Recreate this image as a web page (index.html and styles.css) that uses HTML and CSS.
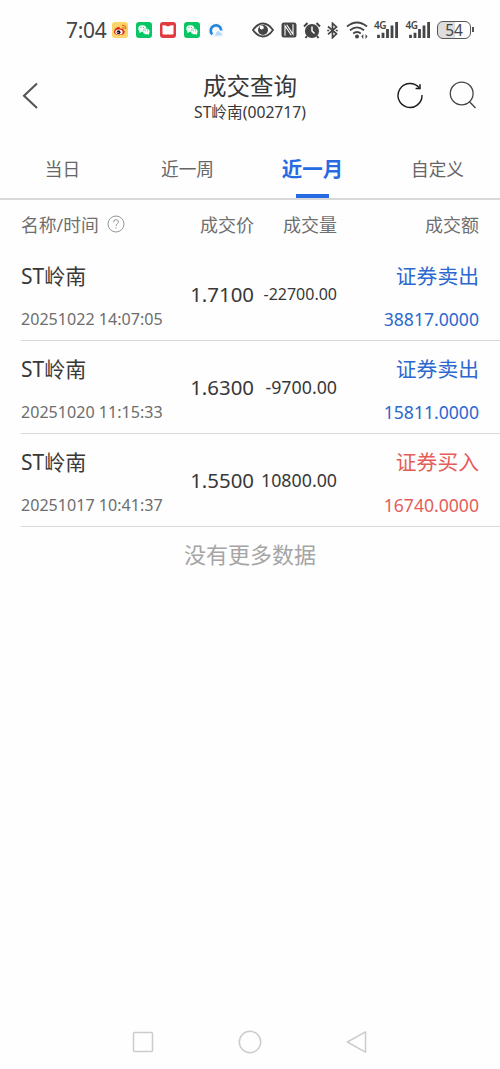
FILE: index.html
```html
<!DOCTYPE html>
<html lang="zh-CN">
<head>
  <meta charset="UTF-8">
  <meta name="viewport" content="width=device-width, initial-scale=1.0">
  <title>成交查询</title>
  <link rel="stylesheet" href="styles.css">
</head>
<body>
  <div class="statusbar">
    <span class="clock">7:04</span>
    <div class="apps">
      <svg width="16" height="16" viewBox="0 0 16 16">
        <rect width="16" height="16" rx="3" fill="#fbd568"/>
        <path d="M2 10C2 7 5.500 4 7.500 5.200Q8.300 6 7.900 6.600Q12 5.800 11.500 8Q13.500 9 12.500 11C11 14 2 14 2 10Z" fill="#dc2b22"/>
        <ellipse cx="6.900" cy="10" rx="3.700" ry="2.600" fill="#fff"/>
        <circle cx="6.600" cy="10.200" r="1.900" fill="#1c1311"/>
        <circle cx="6" cy="10.500" r=".6" fill="#fff"/>
        <path d="M10 3.300Q14.300 3 13.800 7.200M10.200 5.300Q12.200 5 11.900 7" fill="none" stroke="#e8622a" stroke-width="1.100"/>
      </svg>
      <svg width="16" height="16" viewBox="0 0 16 16">
        <rect width="16" height="16" rx="3" fill="#07c664"/>
        <ellipse cx="6.300" cy="6.600" rx="4" ry="3.400" fill="#fff"/>
        <path d="M3.500 8.500L3.300 11L6 9.700Z" fill="#fff"/>
        <ellipse cx="10.300" cy="9.500" rx="3.500" ry="2.900" fill="#fff" stroke="#07c664" stroke-width=".5"/>
        <path d="M11 11.800L13 12.900L12.700 10.500Z" fill="#fff"/>
        <path d="M5 5.600h.1M7.600 5.600h.1M9.200 8.800h.1M11.500 8.800h.1" stroke="#07c664" stroke-width="1" stroke-linecap="round"/>
      </svg>
      <svg width="16" height="16" viewBox="0 0 16 16">
        <rect width="16" height="16" rx="3" fill="#e23a40"/>
        <path d="M2.500 3.200Q5.500 3 8 4.500Q10.500 3 13.500 3.200V11.500Q13.500 12.500 12.500 12.500H3.500Q2.500 12.500 2.500 11.500Z" fill="#fff"/>
      </svg>
      <svg width="16" height="16" viewBox="0 0 16 16">
        <rect width="16" height="16" rx="3" fill="#07c664"/>
        <ellipse cx="6.300" cy="6.600" rx="4" ry="3.400" fill="#fff"/>
        <path d="M3.500 8.500L3.300 11L6 9.700Z" fill="#fff"/>
        <ellipse cx="10.300" cy="9.500" rx="3.500" ry="2.900" fill="#fff" stroke="#07c664" stroke-width=".5"/>
        <path d="M11 11.800L13 12.900L12.700 10.500Z" fill="#fff"/>
        <path d="M5 5.600h.1M7.600 5.600h.1M9.200 8.800h.1M11.500 8.800h.1" stroke="#07c664" stroke-width="1" stroke-linecap="round"/>
      </svg>
      <svg width="16" height="16" viewBox="0 0 16 16">
        <rect width="16" height="16" rx="3" fill="#f7f9fb"/>
        <path d="M4.300 12.400A5.300 5.300 0 1 1 13.300 8.500" fill="none" stroke="#2587dc" stroke-width="2.700"/>
        <path d="M5 13.300Q8 14.200 8 11Q10.500 7.500 12 10.500Q14.500 11 14 13.500Z" fill="#b3dafa"/>
      </svg>
    </div>
    <div class="signals">
      <svg class="eye" width="22" height="16" viewBox="0 0 22 16">
        <path d="M1 8Q5.500 1.500 11 1.500Q16.500 1.500 21 8Q16.500 14.500 11 14.500Q5.500 14.500 1 8Z" fill="none" stroke="#454545" stroke-width="1.800"/>
        <circle cx="11" cy="8" r="5" fill="#454545"/>
        <circle cx="9.700" cy="5.600" r="2" fill="#fff"/>
      </svg>
      <svg class="nfc" width="16" height="16" viewBox="0 0 16 16">
        <rect x=".5" y=".5" width="15" height="15" rx="2.500" fill="#454545"/>
        <path d="M4 13.800V3.800L10.300 13.200M5.700 2.800L12 12.200V2.200" fill="none" stroke="#fff" stroke-width="1.100"/>
      </svg>
      <svg class="alarm" width="18" height="17" viewBox="0 0 18 17">
        <circle cx="9" cy="9" r="7.100" fill="#454545"/>
        <path d="M1 4.500L4.500 1M17 4.500L13.500 1M4 14L2.500 16M14 14L15.500 16" stroke="#454545" stroke-width="2"/>
        <path d="M9 4.500V9L11.500 11.500" fill="none" stroke="#fff" stroke-width="1.500"/>
      </svg>
      <svg class="bluetooth" width="11" height="17" viewBox="0 0 11 17">
        <path d="M1 4.500L9.500 11.800L5.500 15.700V1.300L9.500 5L1 12.300" fill="none" stroke="#454545" stroke-width="1.700"/>
        <path d="M.2 8.500h2M8.800 8.500h2" stroke="#454545" stroke-width="1.600"/>
      </svg>
      <svg class="wifi" width="23" height="18" viewBox="0 0 23 18">
        <path d="M1 5.500Q11 -2.500 21 5.500M4 9.200Q11 3.500 18 9.200M7.200 12.500Q11 9.500 14.800 12.500" fill="none" stroke="#454545" stroke-width="1.800"/>
        <circle cx="11" cy="15.500" r="2" fill="#454545"/>
        <path d="M15.300 15.500L17.300 13V18ZM21.500 15.500L19.500 13V18Z" fill="#454545"/>
      </svg>
      <div class="cell">
        <span>4G</span>
        <svg width="22" height="16" viewBox="0 0 22 16">
          <path d="M1.500 12.700V16M6 10.700V16M10.500 7V16M15 3.500V16M19.600 0V16" stroke="#454545" stroke-width="2.800"/>
        </svg>
      </div>
      <div class="cell">
        <span>4G</span>
        <svg width="22" height="16" viewBox="0 0 22 16">
          <path d="M1.500 12.700V16M6 10.700V16M10.500 7V16M15 3.500V16M19.600 0V16" stroke="#454545" stroke-width="2.800"/>
        </svg>
      </div>
      <div class="battery">54</div>
    </div>
  </div>

  <header class="navbar">
    <svg class="back" width="16" height="28" viewBox="0 0 16 28">
      <path d="M15 1.500L2 13.700L15 26" fill="none" stroke="#555" stroke-width="2.100"/>
    </svg>
    <div class="heading">
      <h1>成交查询</h1>
      <p>ST岭南(002717)</p>
    </div>
    <div class="actions">
      <svg width="28" height="28" viewBox="0 0 28 28">
        <path d="M26 14A12 12 0 1 1 23.200 6.800" fill="none" stroke="#1a1a1a" stroke-width="1.400"/>
        <path d="M24 3.200V7.500H19.600" fill="none" stroke="#1a1a1a" stroke-width="1.500"/>
      </svg>
      <svg width="28" height="28" viewBox="0 0 28 28">
        <circle cx="12.700" cy="12.500" r="11.400" fill="none" stroke="#444" stroke-width="1.300"/>
        <path d="M20.500 20.800L26.500 27" stroke="#444" stroke-width="1.400"/>
      </svg>
    </div>
  </header>

  <nav class="tabs">
    <a class="tab">当日</a>
    <a class="tab">近一周</a>
    <a class="tab active">近一月</a>
    <a class="tab">自定义</a>
  </nav>

  <div class="columns grid">
    <span class="name">名称/时间
      <svg width="18" height="18" viewBox="0 0 18 18">
        <circle cx="9" cy="9" r="8" fill="none" stroke="#8c8c8c" stroke-width=".9"/>
        <path d="M6.500 7.200Q6.500 4.700 9 4.700Q11.500 4.700 11.500 6.900Q11.500 8 10.200 8.900Q9 9.700 9 11M9 12.300V13.500" fill="none" stroke="#8c8c8c" stroke-width=".9"/>
      </svg>
    </span>
    <span class="num">成交价</span>
    <span class="num">成交量</span>
    <span class="num">成交额</span>
  </div>

  <ul class="trades">
    <li class="trade grid">
      <div class="stock"><b>ST岭南</b><time>20251022 14:07:05</time></div>
      <span class="price">1.7100</span>
      <span class="volume small">-22700.00</span>
      <div class="amount sell"><b>证券卖出</b><span>38817.0000</span></div>
    </li>
    <li class="trade grid">
      <div class="stock"><b>ST岭南</b><time>20251020 11:15:33</time></div>
      <span class="price">1.6300</span>
      <span class="volume">-9700.00</span>
      <div class="amount sell"><b>证券卖出</b><span>15811.0000</span></div>
    </li>
    <li class="trade grid">
      <div class="stock"><b>ST岭南</b><time>20251017 10:41:37</time></div>
      <span class="price">1.5500</span>
      <span class="volume">10800.00</span>
      <div class="amount buy"><b>证券买入</b><span>16740.0000</span></div>
    </li>
  </ul>
  <p class="nomore">没有更多数据</p>

  <footer class="syskeys">
    <svg width="24" height="24" viewBox="0 0 24 24"><rect x="2.500" y="2.500" width="19" height="19" rx="1"/></svg>
    <svg width="24" height="24" viewBox="0 0 24 24"><circle cx="12" cy="12" r="10.700"/></svg>
    <svg width="24" height="24" viewBox="0 0 24 24"><path d="M2.300 12L20.500 1.800V22.200Z"/></svg>
  </footer>
</body>
</html>
```
FILE: styles.css
```css
* {
  margin: 0;
  padding: 0;
  box-sizing: border-box;
}

body {
  height: 1069px;
  display: flex;
  flex-direction: column;
  font-family: "Noto Sans", "Noto Sans CJK SC", sans-serif;
  background: #fefefe;
  color: #383838;
  overflow: hidden;
}

svg {
  display: block;
  flex: none;
}

/* status bar */
.statusbar {
  height: 60px;
  padding: 0 29px 0 66px;
  display: flex;
  align-items: center;
  color: #454545;
}

.clock {
  width: 46px;
  font-size: 21px;
  letter-spacing: -0.3px;
}

.apps {
  display: flex;
  gap: 8px;
}

.signals {
  margin-left: auto;
  display: flex;
  align-items: center;
}

.eye { margin-right: 7px; }
.nfc { margin-right: 6px; }
.alarm { margin-right: 6px; }
.bluetooth { margin-right: 8px; }
.wifi { margin-right: 5px; }

.cell {
  position: relative;
  width: 31.5px;
  height: 16px;
  padding-left: 3px;
}

.cell span {
  position: absolute;
  left: 0;
  top: -3px;
  font-size: 10px;
  font-weight: 600;
  line-height: 12px;
  letter-spacing: -0.4px;
}

.battery {
  position: relative;
  width: 34px;
  height: 18px;
  border: 1.5px solid #555;
  border-radius: 6px;
  background: linear-gradient(90deg, #dedede 54%, #fefefe 54%);
  font-size: 15.5px;
  line-height: 16px;
  text-align: center;
}

.battery::after {
  content: "";
  position: absolute;
  right: -4px;
  top: 5px;
  width: 2px;
  height: 5px;
  background: #555;
}

/* title */
.navbar {
  height: 75px;
  padding: 0 23px 0 22px;
  display: grid;
  grid-template-columns: 100px 1fr 99px;
  align-items: start;
}

.back {
  margin-top: 22px;
}

.heading {
  padding-top: 11px;
  text-align: center;
}

.heading h1 {
  font-size: 23.5px;
  font-weight: 400;
  line-height: 30px;
}

.heading p {
  font-size: 15.7px;
  line-height: 22px;
}

.actions {
  padding-top: 21px;
  display: flex;
  justify-content: flex-end;
  gap: 25px;
}

/* period tabs */
.tabs {
  height: 65px;
  display: grid;
  grid-template-columns: repeat(4, 1fr);
  border-bottom: 2px solid #d9d9d9;
}

.tab {
  position: relative;
  height: 63px;
  font-size: 17.7px;
  line-height: 68px;
  text-align: center;
  color: #666;
}

.tab.active {
  font-size: 20.5px;
  font-weight: 700;
  color: #276be3;
}

.tab.active::after {
  content: "";
  position: absolute;
  left: 46px;
  bottom: 0;
  width: 33px;
  height: 4px;
  background: #276be3;
}

/* table */
.grid {
  display: grid;
  grid-template-columns: 150px 83px 83px 142px;
  align-items: center;
}

.columns {
  height: 48px;
  padding: 0 21px;
  font-size: 18px;
  color: #6e6e6e;
}

.columns .name {
  display: flex;
  align-items: center;
  gap: 8px;
  font-size: 17.8px;
}

.num {
  text-align: right;
}

.trades {
  list-style: none;
}

.trade {
  height: 93px;
  margin-left: 21px;
  grid-template-rows: 92px;
  border-bottom: 1px solid #d8d8d8;
}

.trade b {
  display: block;
  font-weight: 400;
  line-height: 43px;
}

.stock,
.amount {
  align-self: start;
  padding-top: 7px;
}

.stock b { font-size: 21px; }

.stock time {
  display: block;
  font-size: 16.1px;
  line-height: 43px;
  color: #6e6e6e;
  white-space: nowrap;
}

.price {
  font-size: 20.4px;
  text-align: right;
}

.volume {
  font-size: 17.8px;
  text-align: right;
}

.volume.small {
  font-size: 16px;
}

.amount {
  text-align: right;
}

.amount b { font-size: 20.8px; }

.amount span {
  display: block;
  font-size: 17.6px;
  line-height: 43px;
}

.sell { color: #2c68cf; }
.buy { color: #e45d5a; }

.nomore {
  font-size: 22px;
  line-height: 54px;
  text-align: center;
  color: #a5a5a5;
}

/* android keys */
.syskeys {
  margin-top: auto;
  height: 55px;
  padding: 0 131px;
  display: flex;
  justify-content: space-between;
  align-items: center;
}

.syskeys svg {
  fill: none;
  stroke: #ccc;
  stroke-width: 1.5;
  stroke-linejoin: round;
}
```
